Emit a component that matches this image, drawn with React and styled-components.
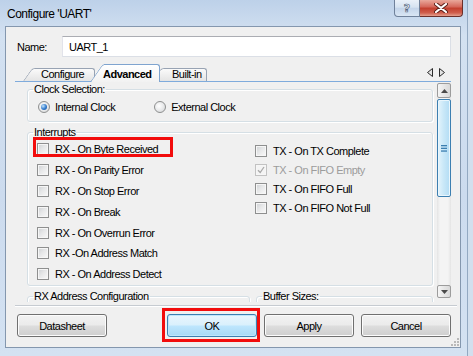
import React from 'react';
import styled, { createGlobalStyle } from 'styled-components';

const UI_FONT = `"Liberation Sans", Arial, sans-serif`;

const GlobalStyle = createGlobalStyle`
  html, body { margin: 0; padding: 0; }
  body {
    width: 473px;
    height: 356px;
    overflow: hidden;
    background: #d2dfee;
    font-family: ${UI_FONT};
    font-size: 11px;
    letter-spacing: -0.5px;
    color: #000;
  }
`;

const Frame = styled.div`
  box-sizing: border-box;
  width: 468px;
  height: 356px;
  display: flex;
  flex-direction: column;
  padding: 0 6px 8px 5px;
  border-right: 1px solid #93a9c2;
  background: linear-gradient(180deg, #bdd1e9 0%, #d3e1f1 10%, #ccdbee 55%, #d4e2f2 100%);
`;

const TitleBar = styled.div`
  height: 26px;
  display: flex;
  align-items: flex-start;
`;

const Title = styled.div`
  padding: 7px 0 0 2px;
  line-height: 14px;
  font-size: 12px;
  letter-spacing: -0.5px;
  color: #000;
`;

const CaptionButtons = styled.div`
  margin-left: auto;
  margin-right: -2px;
  display: flex;
`;

const HelpButton = styled.div`
  box-sizing: border-box;
  width: 26px;
  height: 17px;
  border: 1px solid #6f819a;
  border-top: 0;
  border-radius: 0 0 0 4px;
  background: linear-gradient(180deg, #eaf1f9 0%, #d6e3f1 45%, #c4d5ea 52%, #d9e6f4 100%);
  display: flex;
  align-items: center;
  justify-content: center;
  font-family: "DejaVu Sans", sans-serif;
  font-weight: 700;
  font-size: 11px;
  letter-spacing: 0;
  color: #eef3f9;
  -webkit-text-stroke: 0.7px #56687f;
`;

const CloseButton = styled.div`
  box-sizing: border-box;
  width: 43px;
  height: 17px;
  border: 1px solid #6b2f2a;
  border-top: 0;
  border-left: 0;
  border-radius: 0 0 4px 0;
  background: linear-gradient(180deg, #e9a89b 0%, #d5685b 42%, #c3402f 52%, #cf5e4c 80%, #e4a08f 100%);
  display: flex;
  align-items: center;
  justify-content: center;
`;

const Client = styled.div`
  position: relative;
  flex: 1;
  display: flex;
  flex-direction: column;
  background: #f0f0f0;
  border: 1px solid #8497ae;
  padding: 9px 9px 10px 11px;
`;

const NameRow = styled.div`
  height: 21px;
  display: flex;
  align-items: center;
`;

const NameLabel = styled.label`
  width: 45px;
  flex: none;
`;

const NameInput = styled.input`
  flex: 1;
  box-sizing: border-box;
  height: 21px;
  margin: 0;
  padding: 0 6px;
  border: 1px solid #dbdfe6;
  border-top-color: #abadb3;
  border-left-color: #e2e3ea;
  background: #fff;
  font-family: ${UI_FONT};
  font-size: 11px;
  letter-spacing: -0.5px;
  color: #000;
  outline: none;
`;

const TabStrip = styled.div`
  position: relative;
  display: flex;
  align-items: flex-end;
  height: 17px;
  margin: 7px 0 0 -2px;
  padding-left: 8px;
  border-bottom: 1px solid #7fabdc;
`;

const Tab = styled.div`
  position: relative;
  z-index: ${p => (p.$active ? 3 : 1)};
  box-sizing: border-box;
  width: ${p => p.$w}px;
  height: ${p => (p.$active ? 18 : 13)}px;
  margin-left: ${p => p.$ml}px;
  margin-bottom: ${p => (p.$active ? -1 : 0)}px;
  padding: ${p => (p.$active ? 4 : 0)}px 0 0 ${p => p.$pl}px;
  line-height: 13px;
  font-weight: ${p => (p.$active ? 700 : 400)};
  white-space: nowrap;

  &::before,
  &::after {
    content: '';
    position: absolute;
    top: 0;
    bottom: 0;
    background: ${p => (p.$active
      ? 'linear-gradient(180deg, #ffffff, #f2f2f2)'
      : 'linear-gradient(180deg, #fafafa, #e4e4e4)')};
    border: 1px solid ${p => (p.$active ? '#7fa4cf' : '#98a3b3')};
    border-bottom: 0;
  }

  &::before {
    left: 0;
    width: 24px;
    border-right: 0;
    border-top-left-radius: 3px;
    transform-origin: bottom left;
    transform: skewX(-35deg);
  }

  &::after {
    left: 14px;
    right: 0;
    border-left: 0;
    border-top-right-radius: 3px;
  }
`;

const TabLabel = styled.span`
  position: relative;
  z-index: 1;
`;

const TabArrows = styled.div`
  margin-left: auto;
  margin-right: 6px;
  align-self: center;
  display: flex;
  gap: 6px;
`;

const TabPage = styled.div`
  height: 220px;
  margin-left: -2px;
  display: flex;
  background: #f0f0f0;
`;

const Viewport = styled.div`
  flex: 1;
  overflow: hidden;
  padding: 1px 4px 0 12px;
`;

const Group = styled.fieldset`
  box-sizing: border-box;
  margin: ${p => p.$mt || 0}px 0 0;
  padding: 0;
  height: ${p => p.$h}px;
  width: ${p => (p.$w ? `${p.$w}px` : 'auto')};
  flex: ${p => (p.$w ? 'none' : '1')};
  min-width: 0;
  border: 1px solid #d5dfe5;
  border-radius: 3px;
  box-shadow: inset 1px 1px 0 #fff, 1px 1px 0 #fff;
`;

const Legend = styled.legend`
  margin-left: 5px;
  padding: 0 1px;
  line-height: 13px;
  font-size: 11px;
`;

const RadioRow = styled.div`
  display: flex;
  gap: 39px;
  padding: 4px 0 0 10px;
`;

const Option = styled.label`
  position: relative;
  display: flex;
  align-items: center;
  gap: ${p => p.$gap || 6}px;
  height: ${p => p.$h || 13}px;
  color: ${p => (p.$disabled ? '#9c9c9c' : '#000')};
  white-space: nowrap;
`;

const Radio = styled.span`
  position: relative;
  box-sizing: border-box;
  width: 12px;
  height: 12px;
  flex: none;
  border-radius: 50%;
  border: 1px solid #8e8f8f;
  background: radial-gradient(circle at 40% 40%, #ffffff 0%, #e9eaeb 50%, #cfd1d3 100%);

  &::after {
    content: '';
    display: ${p => (p.$checked ? 'block' : 'none')};
    position: absolute;
    left: 2px;
    top: 2px;
    width: 6px;
    height: 6px;
    border-radius: 50%;
    background: radial-gradient(circle at 35% 35%, #c4e4fb 0%, #2e78cc 55%, #194f98 100%);
  }
`;

const Check = styled.span`
  box-sizing: border-box;
  width: 12px;
  height: 12px;
  flex: none;
  display: flex;
  align-items: center;
  justify-content: center;
  border: 1px solid ${p => (p.$disabled ? '#c2c2c2' : '#8e8f8f')};
  background: ${p => (p.$disabled
    ? '#f4f4f4'
    : 'linear-gradient(135deg, #cdd0d3 0%, #e6e7e8 45%, #fafafa 100%)')};
  box-shadow: inset 0 0 0 1px #f6f6f6;
`;

const Interrupts = styled.div`
  display: grid;
  grid-template-columns: 218px 1fr;
  padding-left: 9px;
`;

const Column = styled.div`
  display: flex;
  flex-direction: column;
  padding-top: ${p => p.$pt || 0}px;
`;

const Highlight = styled.span`
  position: absolute;
  box-sizing: border-box;
  border: 3px solid #f20c0c;
  pointer-events: none;
`;

const LowerGroups = styled.div`
  display: flex;
  gap: 6px;
  margin-top: 4px;
`;

const ScrollBar = styled.div`
  width: 14px;
  margin: 1px 0 4px;
  display: flex;
  flex-direction: column;
  background: linear-gradient(90deg, #e4e4e4 0, #f4f4f4 3px, #f4f4f4 11px, #e4e4e4 14px);
`;

const ScrollButton = styled.div`
  box-sizing: border-box;
  height: ${p => p.$h}px;
  border: 1px solid #9c9c9c;
  border-radius: 2px;
  background: linear-gradient(90deg, #f6f6f6 0%, #e6e6e6 50%, #d9d9d9 100%);
  display: flex;
  align-items: center;
  justify-content: center;
`;

const Thumb = styled.div`
  box-sizing: border-box;
  height: 98px;
  margin-top: 1px;
  border: 1px solid #3c7fb1;
  border-radius: 2px;
  background: linear-gradient(90deg, #e4f4fc 0%, #cae8f8 45%, #b2dcf4 100%);
  box-shadow: inset 0 0 0 1px #e9f6fd;
  display: flex;
  align-items: center;
  justify-content: center;
`;

const Track = styled.div`
  flex: 1;
`;

const Separator = styled.div`
  height: 0;
  margin: 3px -6px 0 -2px;
  border-top: 1px solid #c6cbd1;
  border-bottom: 1px solid #ffffff;
`;

const ButtonRow = styled.div`
  display: flex;
  gap: 7px;
  margin-top: 7px;
  height: 23px;
`;

const Button = styled.button`
  position: relative;
  box-sizing: border-box;
  width: 90px;
  height: 23px;
  margin: 0;
  padding: 0;
  border: 1px solid ${p => (p.$focused ? '#3c7fb1' : '#707070')};
  border-radius: 3px;
  font-family: ${UI_FONT};
  font-size: 11px;
  letter-spacing: -0.5px;
  color: #000;
  background: ${p => (p.$focused
    ? 'linear-gradient(180deg, #eaf6fd 0%, #d9f0fc 48%, #bee6fd 52%, #a7d9f5 100%)'
    : 'linear-gradient(180deg, #f2f2f2 0%, #ebebeb 48%, #dddddd 52%, #cfcfcf 100%)')};
  box-shadow: inset 0 0 0 1px ${p => (p.$focused ? '#bfe6fb' : '#fcfcfc')};
`;

const Spacer = styled.div`
  flex: 1;
`;

const SizeGrip = styled.svg`
  position: absolute;
  right: 1px;
  bottom: 1px;
`;

const CloseGlyph = () => (
  <svg width="14" height="10" viewBox="0 0 14 10">
    <path d="M2 1 L12 9 M12 1 L2 9" stroke="#5a1f18" strokeWidth="4" strokeLinecap="round" />
    <path d="M2 1 L12 9 M12 1 L2 9" stroke="#ffffff" strokeWidth="2.2" strokeLinecap="round" />
  </svg>
);

const TickGlyph = () => (
  <svg width="8" height="8" viewBox="0 0 8 8">
    <path d="M1 4.2 L3.2 6.5 L7 1" fill="none" stroke="#a9a9a9" strokeWidth="1.3" />
  </svg>
);

const Triangle = ({ dir }) => (
  <svg width="6" height="9" viewBox="0 0 6 9">
    <polygon
      points={dir === 'left' ? '5.5,0.5 0.5,4.5 5.5,8.5' : '0.5,0.5 5.5,4.5 0.5,8.5'}
      fill="#e4e4e4"
      stroke="#2b2b2b"
      strokeWidth="1"
    />
  </svg>
);

const ScrollArrow = ({ up }) => (
  <svg width="7" height="4" viewBox="0 0 7 4">
    <polygon points={up ? '0,4 3.5,0 7,4' : '0,0 3.5,4 7,0'} fill="#4a4a4a" />
  </svg>
);

const Grip = () => (
  <svg width="6" height="7" viewBox="0 0 6 7">
    <rect x="0" y="0" width="6" height="1.3" fill="#3c7fb1" />
    <rect x="0" y="2.7" width="6" height="1.3" fill="#3c7fb1" />
    <rect x="0" y="5.4" width="6" height="1.3" fill="#3c7fb1" />
  </svg>
);

const rxItems = [
  'RX - On Byte Received',
  'RX - On Parity Error',
  'RX - On Stop Error',
  'RX - On Break',
  'RX - On Overrun Error',
  'RX -On Address Match',
  'RX - On Address Detect',
];

const txItems = [
  { label: 'TX - On TX Complete' },
  { label: 'TX - On FIFO Empty', disabled: true, checked: true },
  { label: 'TX - On FIFO Full' },
  { label: 'TX - On FIFO Not Full' },
];

export default function App() {
  return (
    <>
      <GlobalStyle />
      <Frame>
        <TitleBar>
          <Title>Configure 'UART'</Title>
          <CaptionButtons>
            <HelpButton>?</HelpButton>
            <CloseButton>
              <CloseGlyph />
            </CloseButton>
          </CaptionButtons>
        </TitleBar>

        <Client>
          <NameRow>
            <NameLabel>Name:</NameLabel>
            <NameInput readOnly value="UART_1" />
          </NameRow>

          <TabStrip>
            <Tab $w={72} $ml={0} $pl={18}>
              <TabLabel>Configure</TabLabel>
            </Tab>
            <Tab $active $w={70} $ml={-5} $pl={13}>
              <TabLabel>Advanced</TabLabel>
            </Tab>
            <Tab $w={55} $ml={-8} $pl={20}>
              <TabLabel>Built-in</TabLabel>
            </Tab>
            <TabArrows>
              <Triangle dir="left" />
              <Triangle dir="right" />
            </TabArrows>
          </TabStrip>

          <TabPage>
            <Viewport>
              <Group $h={39}>
                <Legend>Clock Selection:</Legend>
                <RadioRow>
                  <Option $gap={5}>
                    <Radio $checked />
                    Internal Clock
                  </Option>
                  <Option $gap={5}>
                    <Radio />
                    External Clock
                  </Option>
                </RadioRow>
              </Group>

              <Group $mt={4} $h={160}>
                <Legend>Interrupts</Legend>
                <Interrupts>
                  <Column>
                    {rxItems.map((label, i) => (
                      <Option key={label} $h={20.8} $gap={6}>
                        <Check />
                        {label}
                        {i === 0 && <Highlight style={{ left: -4, top: -2, width: 140, height: 20 }} />}
                      </Option>
                    ))}
                  </Column>
                  <Column $pt={2.7}>
                    {txItems.map(item => (
                      <Option key={item.label} $h={19} $gap={6} $disabled={item.disabled}>
                        <Check $disabled={item.disabled}>{item.checked && <TickGlyph />}</Check>
                        {item.label}
                      </Option>
                    ))}
                  </Column>
                </Interrupts>
              </Group>

              <LowerGroups>
                <Group $w={223} $h={40}>
                  <Legend>RX Address Configuration</Legend>
                </Group>
                <Group $h={40}>
                  <Legend>Buffer Sizes:</Legend>
                </Group>
              </LowerGroups>
            </Viewport>

            <ScrollBar>
              <ScrollButton $h={15}>
                <ScrollArrow up />
              </ScrollButton>
              <Thumb>
                <Grip />
              </Thumb>
              <Track />
              <ScrollButton $h={13}>
                <ScrollArrow />
              </ScrollButton>
            </ScrollBar>
          </TabPage>

          <Separator />

          <ButtonRow>
            <Button>Datasheet</Button>
            <Spacer />
            <Button $focused>
              OK
              <Highlight style={{ left: -6, right: -4, top: -7, bottom: -6 }} />
            </Button>
            <Button>Apply</Button>
            <Button>Cancel</Button>
          </ButtonRow>

          <SizeGrip width="8" height="8" viewBox="0 0 8 8">
            <rect x="6" y="0" width="2" height="2" fill="#b9b9b9" />
            <rect x="3" y="3" width="2" height="2" fill="#b9b9b9" />
            <rect x="6" y="3" width="2" height="2" fill="#b9b9b9" />
            <rect x="0" y="6" width="2" height="2" fill="#b9b9b9" />
            <rect x="3" y="6" width="2" height="2" fill="#b9b9b9" />
            <rect x="6" y="6" width="2" height="2" fill="#b9b9b9" />
          </SizeGrip>
        </Client>
      </Frame>
    </>
  );
}
